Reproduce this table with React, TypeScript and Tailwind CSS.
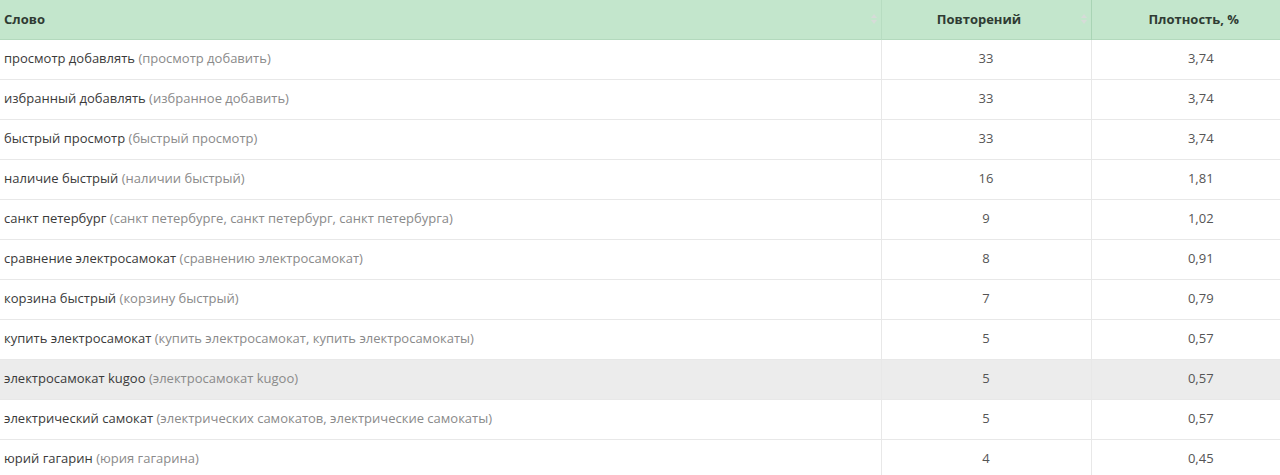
import React from "react";

type Row = { word: string; forms: string; count: number; density: string };

const rows: Row[] = [
  { word: "просмотр добавлять", forms: "просмотр добавить", count: 33, density: "3,74" },
  { word: "избранный добавлять", forms: "избранное добавить", count: 33, density: "3,74" },
  { word: "быстрый просмотр", forms: "быстрый просмотр", count: 33, density: "3,74" },
  { word: "наличие быстрый", forms: "наличии быстрый", count: 16, density: "1,81" },
  { word: "санкт петербург", forms: "санкт петербурге, санкт петербург, санкт петербурга", count: 9, density: "1,02" },
  { word: "сравнение электросамокат", forms: "сравнению электросамокат", count: 8, density: "0,91" },
  { word: "корзина быстрый", forms: "корзину быстрый", count: 7, density: "0,79" },
  { word: "купить электросамокат", forms: "купить электросамокат, купить электросамокаты", count: 5, density: "0,57" },
  { word: "электросамокат kugoo", forms: "электросамокат kugoo", count: 5, density: "0,57" },
  { word: "электрический самокат", forms: "электрических самокатов, электрические самокаты", count: 5, density: "0,57" },
  { word: "юрий гагарин", forms: "юрия гагарина", count: 4, density: "0,45" },
];

// faint sort arrows in header cells
const SortIcon = () => (
  <svg width="6" height="10" viewBox="0 0 6 10" className="absolute right-[4px] top-[14px]">
    <path d="M3 0 L6 4 L0 4 Z" fill="#d6dcd8" />
    <path d="M3 10 L6 6 L0 6 Z" fill="#d6dcd8" />
  </svg>
);

export default function App() {
  return (
    <div className="w-[1280px] h-[475px] overflow-hidden bg-white" style={{ fontFamily: '"Open Sans", sans-serif' }}>
      <table className="w-[1310px] border-collapse table-fixed text-[13px]">
        <colgroup>
          <col className="w-[881px]" />
          <col className="w-[210px]" />
          <col className="w-[219px]" />
        </colgroup>
        <thead>
          <tr className="bg-[#c3e6cc] h-[39px] border-b border-[#b3d9bd]">
            <th className="relative text-left font-bold text-[#2f3b33] pl-[4px] border-r border-[#b7dcc1]">
              Слово
              <SortIcon />
            </th>
            <th className="relative text-center font-bold text-[#2f3b33] pr-[14px] border-r border-[#a9d4b5]">
              Повторений
              <SortIcon />
            </th>
            <th className="relative text-center font-bold text-[#2f3b33] pr-[14px]">
              Плотность, %
              <SortIcon />
            </th>
          </tr>
        </thead>
        <tbody>
          {rows.map((r, i) => (
            <tr key={i} className={`h-[40px] border-b border-[#e8e8e8] ${r.word === "электросамокат kugoo" ? "bg-[#ececec]" : "bg-white"}`}>
              <td className="pl-[4px] text-[#3a3a3a] border-r border-[#e8e8e8] whitespace-nowrap">
                {r.word} <span className="text-[#8a8a8a]">({r.forms})</span>
              </td>
              <td className="text-center text-[#555] border-r border-[#e8e8e8]">{r.count}</td>
              <td className="text-center text-[#555]">{r.density}</td>
            </tr>
          ))}
        </tbody>
      </table>
    </div>
  );
}
